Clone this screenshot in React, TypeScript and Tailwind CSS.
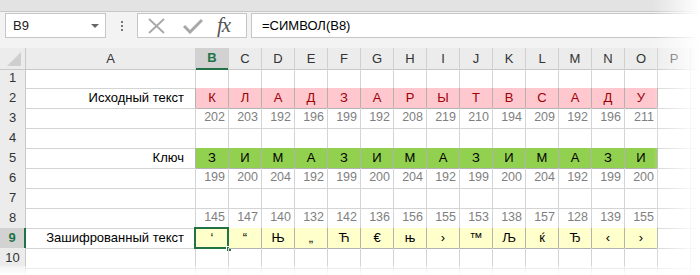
import React from 'react';

const COLS = ['B', 'C', 'D', 'E', 'F', 'G', 'H', 'I', 'J', 'K', 'L', 'M', 'N', 'O'];

const source = ['К', 'Л', 'А', 'Д', 'З', 'А', 'Р', 'Ы', 'Т', 'В', 'С', 'А', 'Д', 'У'];
const sourceCodes = [202, 203, 192, 196, 199, 192, 208, 219, 210, 194, 209, 192, 196, 211];
const key = ['З', 'И', 'М', 'А', 'З', 'И', 'М', 'А', 'З', 'И', 'М', 'А', 'З', 'И'];
const keyCodes = [199, 200, 204, 192, 199, 200, 204, 192, 199, 200, 204, 192, 199, 200];
const cipherCodes = [145, 147, 140, 132, 142, 136, 156, 155, 153, 138, 157, 128, 139, 155];
const cipher = ['‘', '“', 'Њ', '„', 'Ћ', '€', 'њ', '›', '™', 'Љ', 'ќ', 'Ђ', '‹', '›'];

type Row = {
  n: number | string;
  label?: string;
  cells?: (string | number)[];
  kind?: 'pink' | 'green' | 'yellow' | 'num';
};

const rows: Row[] = [
  { n: 1 },
  { n: 2, label: 'Исходный текст', cells: source, kind: 'pink' },
  { n: 3, cells: sourceCodes, kind: 'num' },
  { n: 4 },
  { n: 5, label: 'Ключ', cells: key, kind: 'green' },
  { n: 6, cells: keyCodes, kind: 'num' },
  { n: 7 },
  { n: 8, cells: cipherCodes, kind: 'num' },
  { n: 9, label: 'Зашифрованный текст', cells: cipher, kind: 'yellow' },
  { n: 10 },
  { n: '' },
];

const styled = (k?: string) => k === 'pink' || k === 'green' || k === 'yellow';

function FormulaBar() {
  return (
    <div className="h-[48px] bg-[#f3f3f3] flex flex-col">
      <div className="h-[12px] bg-[#e3e3e3] border-b border-[#c8c8c8]" />
      <div className="flex items-start pt-[1px] pl-[5px]">
        <div className="w-[101px] h-[25px] bg-white border border-[#c6c6c6] flex items-center pl-[7px] pr-[6px] justify-between">
          <span className="text-[13px] text-[#222]">B9</span>
          <svg width="8" height="5" viewBox="0 0 8 5" className="mt-[1px]">
            <path d="M0 0 H8 L4 4 Z" fill="#666" />
          </svg>
        </div>
        <div className="w-[31px] h-[25px] flex flex-col items-center justify-center gap-[2px]">
          <span className="w-[2px] h-[2px] bg-[#777]" />
          <span className="w-[2px] h-[2px] bg-[#777]" />
          <span className="w-[2px] h-[2px] bg-[#777]" />
        </div>
        <div className="w-[110px] h-[25px] bg-white border border-[#c6c6c6] flex items-center">
          <svg width="20" height="16" viewBox="0 0 20 16" className="ml-[9px]">
            <path d="M2 1 L17 15 M17 1 L2 15" stroke="#a8a8a8" strokeWidth="1.8" />
          </svg>
          <svg width="20" height="16" viewBox="0 0 20 16" className="ml-[16px]">
            <path d="M1 8 L7 14 L19 2" stroke="#a8a8a8" strokeWidth="3" fill="none" />
          </svg>
          <span className="ml-[14px] font-['Liberation_Serif',serif] italic text-[21px] leading-none text-[#555] tracking-[-1px]">fx</span>
        </div>
        <div className="flex-1 ml-[4px] h-[25px] bg-white border border-[#c6c6c6] border-r-0 flex items-center pl-[10px]">
          <span className="text-[13px] text-black">=СИМВОЛ(B8)</span>
        </div>
      </div>
    </div>
  );
}

function HeaderRow() {
  const headers = ['A', ...COLS, 'P', ''];
  return (
    <div className="grid grid-cols-[26px_170px_repeat(15,33px)_1fr] h-[20px]">
      <div className="bg-[#ececec] border-r border-b border-[#c8c8c8] relative">
        <svg width="14" height="14" viewBox="0 0 14 14" className="absolute right-[4px] bottom-[3px]">
          <path d="M14 0 V14 H0 Z" fill="#cfcfcf" />
        </svg>
      </div>
      {headers.map((h, i) => {
        const sel = h === 'B';
        return (
          <div
            key={i}
            className={
              'flex items-center justify-center text-[13px] border-r border-[#d0d0d0] ' +
              (sel
                ? 'bg-[#d2d2d2] text-[#217346] font-bold border-b-2 border-b-[#217346]'
                : 'bg-[#ececec] text-[#333] border-b border-b-[#c8c8c8]')
            }
          >
            {h}
          </div>
        );
      })}
    </div>
  );
}

function SheetRow({ row, next }: { row: Row; next?: Row }) {
  const sel = row.n === 9;
  const nextStyled = styled(next?.kind);
  const isStyled = styled(row.kind);
  const fill =
    row.kind === 'pink' ? 'bg-[#ffc7ce] text-[#9c0006]' :
    row.kind === 'green' ? 'bg-[#92d050] text-black' :
    row.kind === 'yellow' ? 'bg-[#ffffcc] text-black' : '';

  return (
    <div className="grid grid-cols-[26px_170px_repeat(15,33px)_1fr] h-[20px]">
      <div
        className={
          'flex items-center justify-center text-[13px] border-b ' +
          (sel
            ? 'bg-[#d2d2d2] text-[#217346] font-bold border-r-2 border-r-[#217346] border-b-[#c8c8c8]'
            : 'bg-[#ececec] text-[#333] border-r border-r-[#c8c8c8] border-b-[#d0d0d0]')
        }
      >
        {row.n}
      </div>
      <div
        className={
          'flex items-center justify-end pr-[11px] text-[13px] text-black border-b border-b-[#d4d4d4] border-r ' +
          (isStyled ? 'border-r-[#b2b2b2]' : 'border-r-[#d4d4d4]')
        }
      >
        {row.label}
      </div>
      {COLS.map((c, i) => {
        const v = row.cells?.[i];
        const border =
          isStyled
            ? 'border-r border-b border-[#b2b2b2] ' + fill
            : 'border-r border-b border-r-[#d4d4d4] ' + (nextStyled ? 'border-b-[#b2b2b2]' : 'border-b-[#d4d4d4]');
        const align =
          row.kind === 'num'
            ? 'justify-end pr-[3px] text-[12.5px] text-[#7f7f7f]'
            : 'justify-center text-[13px]';
        const isSel = sel && c === 'B';
        return (
          <div key={c} className={'relative flex items-center ' + border + ' ' + align}>
            {v}
            {isSel && (
              <>
                <div className="absolute -left-[2px] -top-[1px] -right-[1px] -bottom-[1px] border-2 border-[#217346]" />
                <div className="absolute -right-[4px] -bottom-[4px] w-[6px] h-[6px] bg-[#217346] border border-white" />
              </>
            )}
          </div>
        );
      })}
      <div className="border-r border-b border-[#d4d4d4]" />
      <div className="border-b border-[#d4d4d4]" />
    </div>
  );
}

export default function App() {
  return (
    <div className="w-[700px] h-[275px] overflow-hidden relative bg-white font-['Liberation_Sans',Arial,sans-serif]">
      <FormulaBar />
      <HeaderRow />
      {rows.map((r, i) => (
        <SheetRow key={i} row={r} next={rows[i + 1]} />
      ))}
      {/* faded torn edges of the screenshot */}
      <div className="absolute right-0 top-0 bottom-0 w-[48px] bg-linear-to-r from-white/0 to-white" />
      <div className="absolute left-0 right-0 top-[266px] bottom-0 bg-linear-to-b from-white/40 to-white" />
    </div>
  );
}
